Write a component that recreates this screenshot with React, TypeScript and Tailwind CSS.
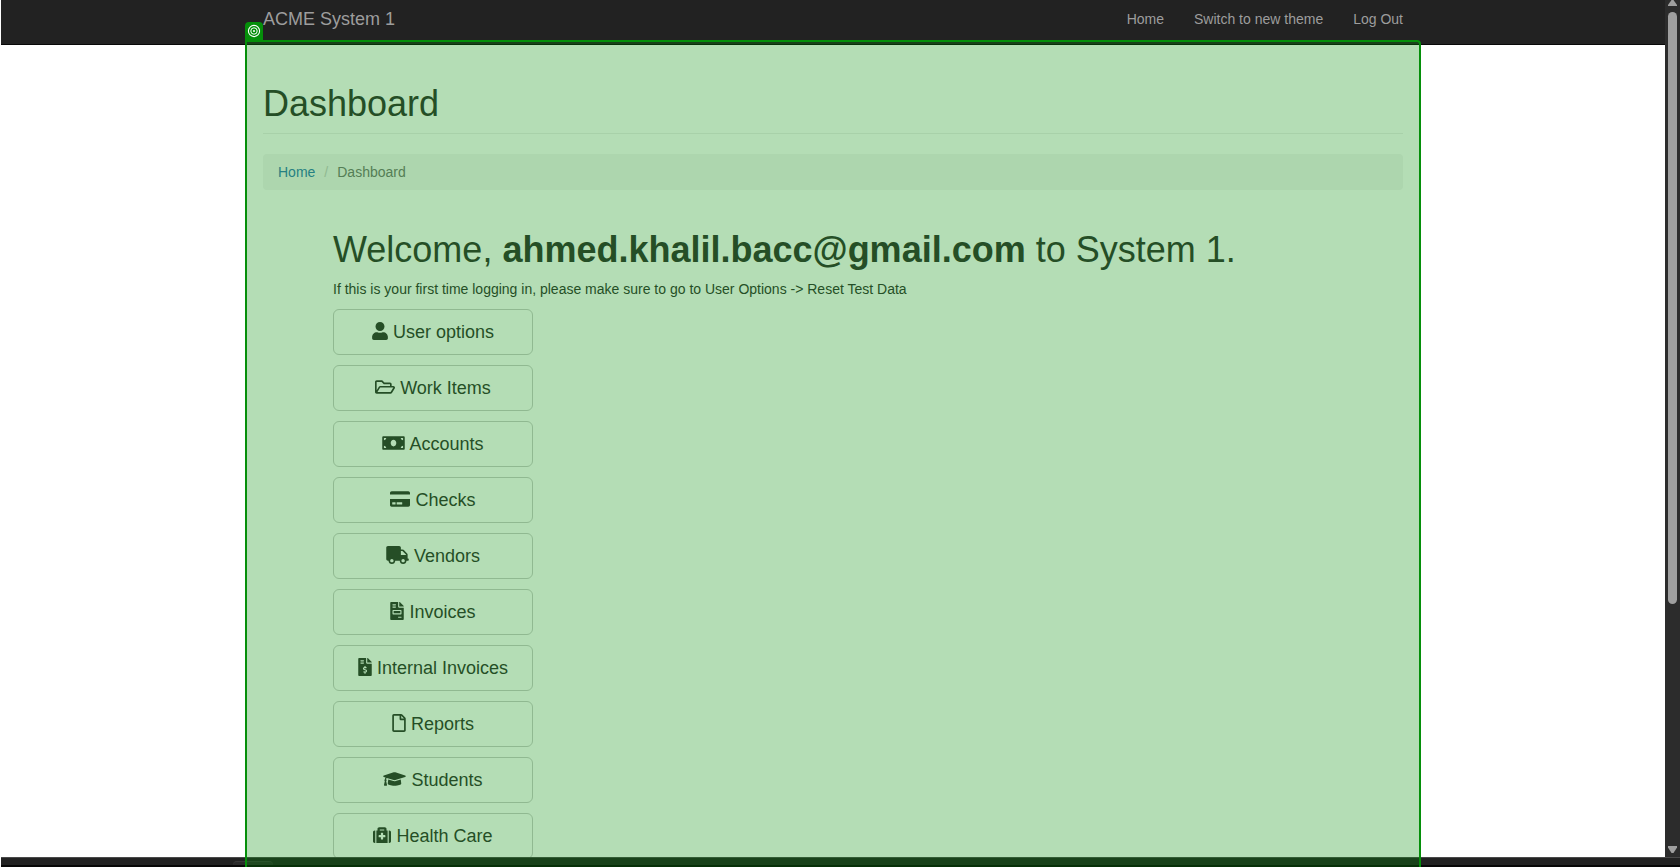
import type { IconType } from "react-icons";
import {
  FaUser,
  FaRegFolderOpen,
  FaMoneyBill,
  FaCreditCard,
  FaTruck,
  FaFileInvoice,
  FaFileInvoiceDollar,
  FaRegFile,
  FaGraduationCap,
  FaMedkit,
} from "react-icons/fa";

const menu: { label: string; icon: IconType; width: string }[] = [
  { label: "User options", icon: FaUser, width: "w-4" },
  { label: "Work Items", icon: FaRegFolderOpen, width: "w-5" },
  { label: "Accounts", icon: FaMoneyBill, width: "w-[23px]" },
  { label: "Checks", icon: FaCreditCard, width: "w-5" },
  { label: "Vendors", icon: FaTruck, width: "w-[23px]" },
  { label: "Invoices", icon: FaFileInvoice, width: "w-[14px]" },
  { label: "Internal Invoices", icon: FaFileInvoiceDollar, width: "w-[14px]" },
  { label: "Reports", icon: FaRegFile, width: "w-[14px]" },
  { label: "Students", icon: FaGraduationCap, width: "w-[23px]" },
  { label: "Health Care", icon: FaMedkit, width: "w-[18px]" },
];

const navLinks = ["Home", "Switch to new theme", "Log Out"];

function Navbar() {
  return (
    <header className="border-b border-[#080808] bg-[#222] pt-[9px] pb-[15px] text-[#9d9d9d]">
      <div className="mx-auto flex max-w-[1170px] justify-between px-[15px]">
        <a href="#home" className="text-lg leading-5">
          ACME System 1
        </a>
        <nav className="flex gap-[30px]">
          {navLinks.map((label) => (
            <a key={label} href="#nav">
              {label}
            </a>
          ))}
        </nav>
      </div>
    </header>
  );
}

function Breadcrumb() {
  return (
    <nav aria-label="Breadcrumb" className="mt-5 rounded bg-[#f5f5f5] px-[15px] py-2">
      <ol className="flex">
        <li>
          <a href="#home" className="text-[#337ab7]">
            Home
          </a>
        </li>
        <li aria-hidden="true" className="px-[9px] text-[#ccc]">
          /
        </li>
        <li className="text-[#777]">Dashboard</li>
      </ol>
    </nav>
  );
}

function Scrollbar() {
  return (
    <div className="flex w-[15px] shrink-0 flex-col items-center bg-[#2c2c2c]">
      <svg className="h-[6px] w-[9px]" viewBox="0 0 9 6" fill="#9f9f9f" aria-hidden="true">
        <path d="M3.5 0h2L9 5v1H0V5z" />
      </svg>
      <div className="mt-[6px] flex w-[9px] flex-1 flex-col">
        <div className="h-[71%] rounded-full bg-[#9f9f9f]" />
      </div>
      <svg className="mb-1 h-[7px] w-[9px]" viewBox="0 0 9 7" fill="#9f9f9f" aria-hidden="true">
        <path d="M0 0h9v1.5L5.5 7h-2L0 1.5z" />
      </svg>
    </div>
  );
}

function SelectionOverlay() {
  return (
    <div className="pointer-events-none absolute inset-0 flex justify-center overflow-hidden pt-10 pr-[15px] pl-px">
      <div className="relative w-full max-w-[1176px] rounded-tr border-2 border-b-0 border-[#058f0a] bg-[#058f0a]/30 bg-clip-padding">
        <span className="absolute -top-5 -left-0.5 flex h-[18px] w-[18px] items-center justify-center rounded-t bg-[#058f0a]">
          <svg className="h-[14px] w-[14px]" viewBox="0 0 14 14" fill="none" stroke="#fff" aria-hidden="true">
            <circle cx="7" cy="7" r="5.6" strokeWidth="1.1" />
            <circle cx="7" cy="7" r="3.2" strokeWidth="1" />
            <circle cx="7" cy="7" r="1" fill="#fff" stroke="none" />
          </svg>
        </span>
      </div>
    </div>
  );
}

export default function App() {
  return (
    <div className="relative flex h-screen flex-col overflow-hidden bg-white font-['Liberation_Sans',Arial,sans-serif] text-sm text-[#333]">
      <div className="flex min-h-0 flex-1 pl-px">
        <div className="min-w-0 flex-1 overflow-hidden">
          <Navbar />
          <main className="mx-auto max-w-[1170px] px-[15px] pt-[39px]">
            <div className="border-b border-[#eee] pb-[9px]">
              <h1 className="text-4xl leading-10">Dashboard</h1>
            </div>
            <Breadcrumb />
            <section className="mt-10 px-[70px]">
              <h2 className="text-4xl leading-10">
                Welcome, <strong className="font-bold">ahmed.khalil.bacc@gmail.com</strong> to System 1.
              </h2>
              <p className="mt-[9px] mb-[10px]">
                If this is your first time logging in, please make sure to go to User Options -&gt; Reset Test Data
              </p>
              <div className="flex w-[200px] flex-col gap-[10px]">
                {menu.map(({ label, icon: Icon, width }) => (
                  <button
                    key={label}
                    type="button"
                    className="rounded-md border border-[#ccc] bg-white py-[10px] text-lg leading-6"
                  >
                    <Icon className={`inline-block h-[18px] align-[-2px] ${width}`} aria-hidden="true" /> {label}
                  </button>
                ))}
              </div>
            </section>
          </main>
        </div>
        <Scrollbar />
      </div>
      <footer className="ml-px flex h-[10px] shrink-0 items-end border-t border-b-2 border-t-[#4a4a4a] border-b-[#080808] bg-[#222]">
        <span className="ml-[232px] h-1 w-10 rounded-t border-t border-[#383838] bg-[#2a2a2a]" />
      </footer>
      <SelectionOverlay />
    </div>
  );
}
